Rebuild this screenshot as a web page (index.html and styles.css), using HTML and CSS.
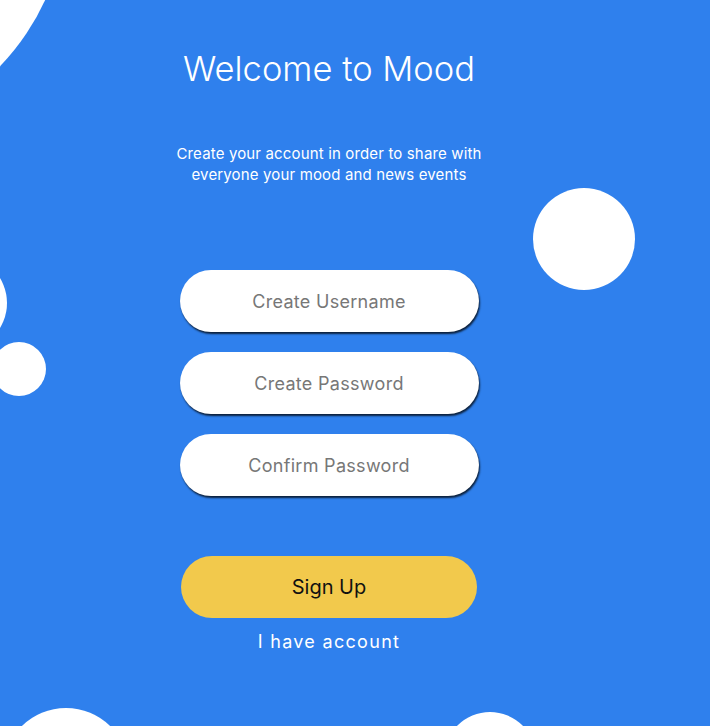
FILE: index.html
```html
<!DOCTYPE html>
<html lang="en">
<head>
<meta charset="utf-8">
<title>Mood - Sign Up</title>
<link rel="stylesheet" href="styles.css">
</head>
<body>
<div class="screen">
  <div class="bubbles" aria-hidden="true">
    <span class="bubble b1"></span>
    <span class="bubble b2"></span>
    <span class="bubble b3"></span>
    <span class="bubble b4"></span>
    <span class="bubble b5"></span>
    <span class="bubble b6"></span>
  </div>
  <main class="signup">
    <h1 class="title">Welcome to Mood</h1>
    <p class="subtitle">Create your account in order to share with<br>everyone your mood and news events</p>
    <form class="form">
      <input class="field" type="text" placeholder="Create Username">
      <input class="field" type="password" placeholder="Create Password">
      <input class="field" type="password" placeholder="Confirm Password">
      <button class="btn" type="button">Sign Up</button>
      <a class="link" href="#">I have account</a>
    </form>
  </main>
</div>
</body>
</html>
```
FILE: styles.css
```css
* { box-sizing: border-box; }
html, body { margin: 0; padding: 0; overflow: hidden; }
body {
  background: #2f80ed;
  font-family: Inter, "Open Sans", sans-serif;
  color: #ffffff;
}
.screen {
  position: relative;
  width: 710px;
  height: 726px;
  overflow: hidden;
  background: #2f80ed;
}
.bubbles { position: absolute; inset: 0; pointer-events: none; }
.bubble { position: absolute; background: #ffffff; border-radius: 50%; }
.b1 { left: -413px; top: -340px; width: 480px; height: 480px; }
.b2 { left: 533px; top: 188px; width: 102px; height: 102px; }
.b3 { left: -89px; top: 255px; width: 96px; height: 96px; }
.b4 { left: -8px; top: 342px; width: 54px; height: 54px; }
.b5 { left: 3px; top: 708px; width: 126px; height: 126px; }
.b6 { left: 444px; top: 712px; width: 92px; height: 92px; }

.signup {
  position: relative;
  width: 300px;
  margin-left: 179px;
  padding-top: 47px;
  display: flex;
  flex-direction: column;
  align-items: center;
}
.title {
  margin: 0;
  font-size: 34.5px;
  font-weight: 300;
  line-height: 44px;
  white-space: nowrap;
}
.subtitle {
  margin: 52px 0 0;
  font-size: 15px;
  line-height: 21px;
  text-align: center;
  white-space: nowrap;
  letter-spacing: 0.15px;
}
.form {
  margin-top: 85px;
  width: 100%;
  display: flex;
  flex-direction: column;
  align-items: center;
}
.field {
  width: 299px;
  height: 62px;
  margin-bottom: 20px;
  border: none;
  border-radius: 31px;
  background: #ffffff;
  box-shadow: 1px 2px 2px rgba(0, 0, 0, 0.75);
  font-family: inherit;
  font-size: 18px;
  letter-spacing: 0.3px;
  text-align: center;
  color: #333;
  outline: none;
}
.field::placeholder { color: #777777; }
.btn {
  margin-top: 40px;
  width: 296px;
  height: 62px;
  border: none;
  border-radius: 31px;
  background: #f2c94c;
  font-family: inherit;
  font-size: 20px;
  color: #111111;
}
.link {
  margin-top: 10px;
  font-size: 18px;
  line-height: 28px;
  color: #ffffff;
  text-decoration: none;
  letter-spacing: 1.3px;
}
```
